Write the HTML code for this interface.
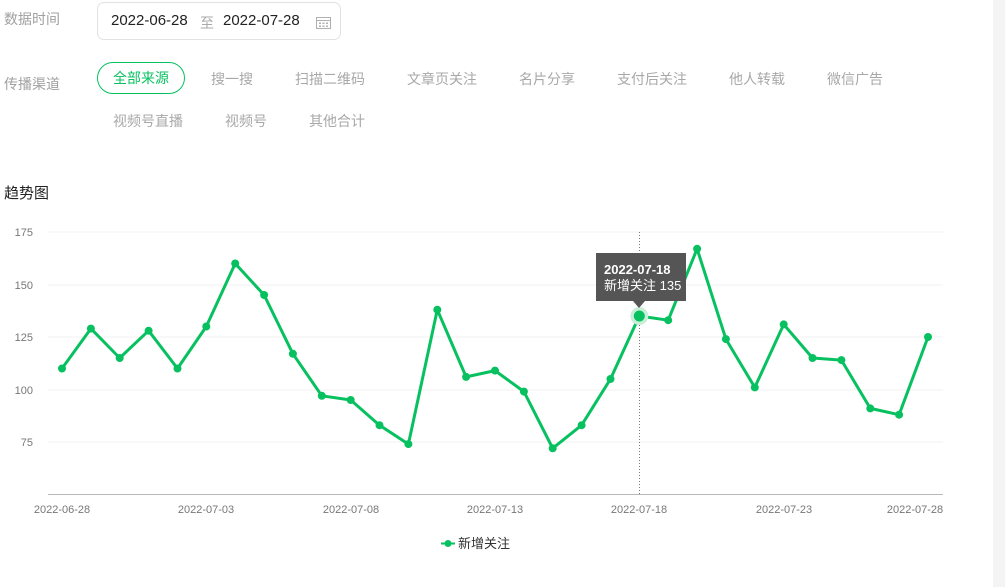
<!DOCTYPE html>
<html><head><meta charset="utf-8"><style>
body{margin:0;width:1005px;height:587px;background:#fff;font-family:"Liberation Sans","Noto Sans CJK SC",sans-serif;position:relative;overflow:hidden}
.a{position:absolute;white-space:nowrap}
.lbl{color:#a0a0a0;font-size:14px}
.tab{color:#a8a8a8;font-size:14px}
</style></head><body>
<div class="a lbl" style="left:4px;top:9px">数据时间</div>
<div class="a" style="left:97px;top:2px;width:244px;height:38px;border:1px solid #e2e2e2;border-radius:7px;box-sizing:border-box"></div>
<div class="a" style="left:111px;top:12px;font-size:15px;color:#222">2022-06-28</div>
<div class="a" style="left:200px;top:13px;font-size:14px;color:#aaa">至</div>
<div class="a" style="left:223px;top:12px;font-size:15px;color:#222">2022-07-28</div>
<svg class="a" style="left:315px;top:15px" width="18" height="16"><rect x="1.5" y="2.5" width="14" height="11" fill="none" stroke="#b0b0b0"/><line x1="1.5" y1="5.5" x2="15.5" y2="5.5" stroke="#b0b0b0"/><g fill="#b0b0b0"><rect x="4" y="7.5" width="2" height="1.5"/><rect x="7.5" y="7.5" width="2" height="1.5"/><rect x="11" y="7.5" width="2" height="1.5"/><rect x="4" y="10.5" width="2" height="1.5"/><rect x="7.5" y="10.5" width="2" height="1.5"/><rect x="11" y="10.5" width="2" height="1.5"/></g></svg>
<div class="a lbl" style="left:4px;top:74px">传播渠道</div>
<div class="a" style="left:97px;top:62px;width:88px;height:32px;border:1px solid #07c160;border-radius:16px;box-sizing:border-box;color:#07c160;font-size:14px;text-align:center;line-height:30px">全部来源</div>
<div class="a tab" style="left:211px;top:69px">搜一搜</div>
<div class="a tab" style="left:295px;top:69px">扫描二维码</div>
<div class="a tab" style="left:407px;top:69px">文章页关注</div>
<div class="a tab" style="left:519px;top:69px">名片分享</div>
<div class="a tab" style="left:617px;top:69px">支付后关注</div>
<div class="a tab" style="left:729px;top:69px">他人转载</div>
<div class="a tab" style="left:827px;top:69px">微信广告</div>
<div class="a tab" style="left:113px;top:111px">视频号直播</div>
<div class="a tab" style="left:225px;top:111px">视频号</div>
<div class="a tab" style="left:309px;top:111px">其他合计</div>
<div class="a" style="left:4px;top:182px;font-size:15px;color:#222">趋势图</div>
<div class="a" style="left:993px;top:0;width:12px;height:587px;background:#f4f4f4"></div>
<svg class="a" style="left:0;top:0" width="1005" height="587">
<g stroke="#f0f0f0"><line x1="48" y1="232" x2="943" y2="232"/><line x1="48" y1="285" x2="943" y2="285"/><line x1="48" y1="337" x2="943" y2="337"/><line x1="48" y1="390" x2="943" y2="390"/><line x1="48" y1="442" x2="943" y2="442"/></g>
<line x1="48" y1="494.5" x2="943" y2="494.5" stroke="#b8b8b8"/>
<g font-size="11" fill="#777" text-anchor="end" font-family="Liberation Sans"><text x="33" y="236">175</text><text x="33" y="289">150</text><text x="33" y="341">125</text><text x="33" y="394">100</text><text x="33" y="446">75</text></g>
<g font-size="11" fill="#777" text-anchor="middle" font-family="Liberation Sans"><text x="62" y="513">2022-06-28</text><text x="206" y="513">2022-07-03</text><text x="351" y="513">2022-07-08</text><text x="495" y="513">2022-07-13</text><text x="639" y="513">2022-07-18</text><text x="784" y="513">2022-07-23</text><text x="915" y="513">2022-07-28</text></g>
<line x1="639.5" y1="232" x2="639.5" y2="494" stroke="#777" stroke-dasharray="1,2"/>
<polyline fill="none" stroke="#07c160" stroke-width="3" stroke-linejoin="round" points="62,368.5 90.9,328.6 119.7,358 148.6,330.7 177.5,368.5 206.3,326.5 235.2,263.5 264.1,295 292.9,353.8 321.8,395.8 350.7,400 379.5,425.2 408.4,444.1 437.3,309.7 466.1,376.9 495,370.6 523.9,391.6 552.7,448.3 581.6,425.2 610.5,379 639.3,316 668.2,320.2 697.1,248.8 725.9,339.1 754.8,387.4 783.7,324.4 812.5,358 841.4,360.1 870.3,408.4 899.1,414.7 928,337"/>
<g fill="#07c160"><circle cx="62" cy="368.5" r="4"/><circle cx="90.9" cy="328.6" r="4"/><circle cx="119.7" cy="358" r="4"/><circle cx="148.6" cy="330.7" r="4"/><circle cx="177.5" cy="368.5" r="4"/><circle cx="206.3" cy="326.5" r="4"/><circle cx="235.2" cy="263.5" r="4"/><circle cx="264.1" cy="295" r="4"/><circle cx="292.9" cy="353.8" r="4"/><circle cx="321.8" cy="395.8" r="4"/><circle cx="350.7" cy="400" r="4"/><circle cx="379.5" cy="425.2" r="4"/><circle cx="408.4" cy="444.1" r="4"/><circle cx="437.3" cy="309.7" r="4"/><circle cx="466.1" cy="376.9" r="4"/><circle cx="495" cy="370.6" r="4"/><circle cx="523.9" cy="391.6" r="4"/><circle cx="552.7" cy="448.3" r="4"/><circle cx="581.6" cy="425.2" r="4"/><circle cx="610.5" cy="379" r="4"/><circle cx="668.2" cy="320.2" r="4"/><circle cx="697.1" cy="248.8" r="4"/><circle cx="725.9" cy="339.1" r="4"/><circle cx="754.8" cy="387.4" r="4"/><circle cx="783.7" cy="324.4" r="4"/><circle cx="812.5" cy="358" r="4"/><circle cx="841.4" cy="360.1" r="4"/><circle cx="870.3" cy="408.4" r="4"/><circle cx="899.1" cy="414.7" r="4"/><circle cx="928" cy="337" r="4"/></g>
<circle cx="639.3" cy="316" r="9" fill="#c9eed8"/><circle cx="639.3" cy="316" r="5.5" fill="#07c160"/>
<path d="M596 253 H686 V301 H645 L639 308 L633 301 H596 Z" fill="#555"/>
<text x="604" y="274" font-size="13" font-weight="bold" fill="#fff" font-family="Liberation Sans">2022-07-18</text>
<text x="604" y="290" font-size="13" fill="#fff" font-family="Liberation Sans,Noto Sans CJK SC">新增关注 135</text>
<line x1="441" y1="543.5" x2="455" y2="543.5" stroke="#07c160" stroke-width="2"/><circle cx="448" cy="543.5" r="3.5" fill="#07c160"/>
<text x="458" y="548" font-size="13" fill="#333" font-family="Liberation Sans,Noto Sans CJK SC">新增关注</text>
</svg>
</body></html>
